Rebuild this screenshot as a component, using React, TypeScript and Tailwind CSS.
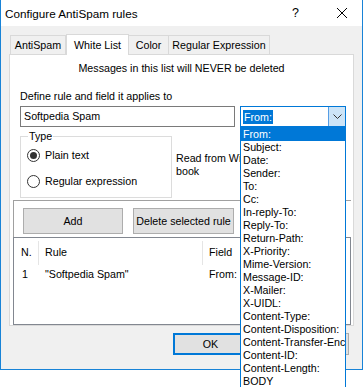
const FIELDS = [
  "From:",
  "Subject:",
  "Date:",
  "Sender:",
  "To:",
  "Cc:",
  "In-reply-To:",
  "Reply-To:",
  "Return-Path:",
  "X-Priority:",
  "Mime-Version:",
  "Message-ID:",
  "X-Mailer:",
  "X-UIDL:",
  "Content-Type:",
  "Content-Disposition:",
  "Content-Transfer-Encoding:",
  "Content-ID:",
  "Content-Length:",
  "BODY",
];

function Radio({ checked, label }: { checked?: boolean; label: string }) {
  return (
    <div className="flex items-center gap-[5px] h-[13px]">
      <span className="w-[13px] h-[13px] rounded-full border border-[#333333] bg-white flex items-center justify-center">
        {checked && <span className="w-[7px] h-[7px] rounded-full bg-[#333333]" />}
      </span>
      <span className="whitespace-nowrap">{label}</span>
    </div>
  );
}

function FieldSelect() {
  return (
    <div className="relative w-[106px] h-[21px] border border-[#0078d7] bg-white flex">
      <div className="flex-1 flex items-center pl-[2px]">
        <span className="bg-[#0078d7] text-white px-[1px] leading-[14px]">From:</span>
      </div>
      <div className="w-[17px] bg-[#cce4f7] border-l border-[#569de5] flex items-center justify-center">
        <svg width="9" height="5" viewBox="0 0 9 5" fill="none" stroke="#333" strokeWidth="1">
          <path d="M0.5 0.5 L4.5 4.5 L8.5 0.5" />
        </svg>
      </div>

      {/* open dropdown list */}
      <ul className="absolute left-[-1px] top-[20px] w-[106px] border border-[#0078d7] bg-white z-20">
        {FIELDS.map((f, i) => (
          <li
            key={f}
            className={
              "h-[13px] leading-[13px] pl-[2px] whitespace-nowrap overflow-hidden " +
              (i === 0 ? "bg-[#0078d7] text-white" : "")
            }
          >
            {f}
          </li>
        ))}
      </ul>
    </div>
  );
}

export default function App() {
  return (
    <div className="relative w-[364px] h-[387px] bg-white overflow-hidden text-black font-['Liberation_Sans',sans-serif] text-[10.7px] leading-[13px]">
      <div className="w-[363px] h-[370px] flex flex-col border-x border-b border-[#1883d7]">
        {/* title bar */}
        <div className="h-[26px] shrink-0 bg-white flex items-center pl-[4px] text-[11.7px]">
          <span className="flex-1">Configure AntiSpam rules</span>
          <span className="text-[12.5px] mr-[38px]">?</span>
          <svg className="mr-[15px]" width="10" height="10" viewBox="0 0 10 10" stroke="#000" strokeWidth="1">
            <path d="M0 0 L10 10 M10 0 L0 10" />
          </svg>
        </div>

        {/* client area */}
        <div className="flex-1 bg-[#f0f0f0] pt-[8px] pl-[8px]">
          {/* tabs */}
          <div className="flex items-end h-[21px] -mb-px ml-[1px] whitespace-nowrap">
            <div className="w-[56px] h-[19px] border-t border-x border-[#d9d9d9] flex items-center justify-center mb-px">
              AntiSpam
            </div>
            <div className="relative z-10 w-[63px] h-[21px] border-t border-x border-[#d9d9d9] bg-white flex items-center justify-center">
              White List
            </div>
            <div className="w-[40px] h-[19px] border-t border-r border-[#d9d9d9] flex items-center justify-center mb-px">
              Color
            </div>
            <div className="w-[101px] h-[19px] border-t border-r border-[#d9d9d9] flex items-center justify-center mb-px">
              Regular Expression
            </div>
          </div>

          {/* tab page */}
          <div className="w-[345px] h-[272px] border border-[#d9d9d9] bg-white flex flex-col">
            <p className="mt-[7px] text-center">Messages in this list will NEVER be deleted</p>
            <p className="mt-[15px] ml-[10px]">Define rule and field it applies to</p>

            <div className="flex gap-[5px] mt-[3px] ml-[10px]">
              <div className="w-[215px] h-[21px] border border-[#7a7a7a] bg-white flex items-center pl-[3px]">
                Softpedia Spam
              </div>
              <FieldSelect />
            </div>

            <div className="flex items-start ml-[10px] mt-[3px]">
              <fieldset className="w-[152px] h-[68px] border border-[#dcdcdc] pl-[6px]">
                <legend className="ml-[1px] px-[1px] leading-[13px]">Type</legend>
                <div className="flex flex-col gap-[13px] mt-[6px]">
                  <Radio checked label="Plain text" />
                  <Radio label="Regular expression" />
                </div>
              </fieldset>
              <p className="ml-[4px] mt-[22px] whitespace-nowrap">
                Read from Windows Address
                <br />
                book
              </p>
            </div>

            {/* rule buttons */}
            <div className="mt-[2px] ml-[3px] w-[338px] h-[37px] border-t border-l border-[#a0a0a0] flex items-start gap-[10px] pt-[7px] pl-[9px] whitespace-nowrap">
              <button className="w-[100px] h-[26px] bg-[#e1e1e1] border border-[#adadad]">Add</button>
              <button className="w-[101px] h-[26px] bg-[#e1e1e1] border border-[#adadad]">Delete selected rule</button>
            </div>

            {/* rules list */}
            <div className="ml-[3px] w-[338px] h-[89px] border border-[#828790] bg-white whitespace-nowrap">
              <div className="flex h-[24px] mt-[3px]">
                <div className="w-[25px] border-r border-[#e5e5e5] flex items-center pl-[7px]">N.</div>
                <div className="w-[164px] border-r border-[#e5e5e5] flex items-center pl-[6px]">Rule</div>
                <div className="flex-1 flex items-center pl-[6px]">Field</div>
              </div>
              <div className="flex h-[14px] mt-[3px] items-center">
                <div className="w-[25px] pl-[8px]">1</div>
                <div className="w-[164px] pl-[6px]">"Softpedia Spam"</div>
                <div className="flex-1 pl-[6px]">From:</div>
              </div>
            </div>
          </div>

          {/* dialog buttons */}
          <div className="flex justify-end gap-[26px] mt-[7px] pr-[13px]">
            <button className="w-[75px] h-[22px] bg-[#e1e1e1] border-2 border-[#0078d7]">OK</button>
            <button className="w-[75px] h-[22px] bg-[#e1e1e1] border border-[#adadad]">Cancel</button>
          </div>
        </div>
      </div>
    </div>
  );
}
